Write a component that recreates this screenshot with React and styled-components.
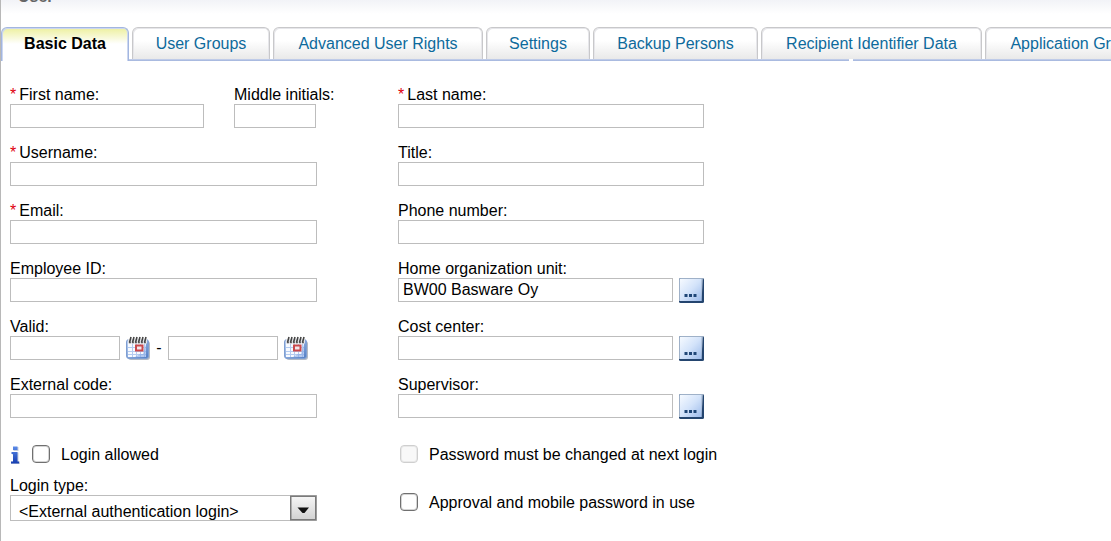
import React, { useState } from 'react';
import styled, { createGlobalStyle, css } from 'styled-components';

const GlobalStyle = createGlobalStyle`
  * { box-sizing: border-box; }
  body {
    margin: 0;
    background: #fff;
    color: #000;
    font: 16px/20px "Liberation Sans", Arial, sans-serif;
    overflow: hidden;
  }
  input, button, select { font: inherit; color: inherit; margin: 0; }
`;

const Page = styled.main`
  min-height: 100vh;
  border-left: 1px solid #b8b8b8;
`;

const Header = styled.header`
  height: 27px;
  overflow: hidden;
  background: linear-gradient(#f2f3f7, #fff 14px);
`;

const Title = styled.h1`
  margin: -13px 0 0 17px;
  font-size: 16px;
  line-height: 20px;
  color: #666;
`;

const TabBar = styled.div`
  position: relative;
  display: flex;
  gap: 3px;
  height: 34px;
  overflow: hidden;
  background: linear-gradient(#c9d3ec, #9fb2dc) bottom / 100% 2px no-repeat;

  &::after {
    content: '';
    position: absolute;
    left: 848px;
    bottom: 0;
    width: 4px;
    height: 2px;
    background: #fff;
  }
`;

const Tab = styled.button`
  flex: none;
  width: ${(p) => p.$width}px;
  height: 32px;
  padding: 0;
  border: 1px solid #c8c8ca;
  border-bottom: 0;
  border-radius: 6px 6px 0 0;
  background: linear-gradient(#fff 40%, #e9e9e9);
  box-shadow: inset 1px 1px 0 #e6e6ea, inset -1px 0 0 #e6e6ea;
  color: #0d6a9c;
  line-height: 30px;
  text-align: center;
  white-space: nowrap;

  ${(p) =>
    p.$active &&
    css`
      height: 34px;
      padding-bottom: 2px;
      border-color: #a3b6e0;
      background: linear-gradient(#edf09f, #fff 16px);
      box-shadow: inset 1px 1px 0 #ccd7f0, inset -1px 0 0 #ccd7f0;
      color: #000;
      font-weight: bold;
    `}
`;

const Form = styled.form`
  display: grid;
  grid-template-columns: minmax(0, 307px) minmax(0, 340px);
  column-gap: 81px;
  padding: 23px 9px 20px;
`;

const Column = styled.div`
  display: flex;
  flex-direction: column;
`;

const Fields = styled.div`
  display: flex;
  flex-direction: column;
  gap: 14px;
  max-width: ${(p) => p.$width}px;
`;

const FieldRow = styled.div`
  display: flex;
  gap: 30px;
`;

const Field = styled.div`
  flex: ${(p) => (p.$width ? `0 0 ${p.$width}px` : '1 1 auto')};
  min-width: 0;
`;

const Label = styled.label`
  display: block;
  height: 20px;
  line-height: 22px;
  white-space: nowrap;
`;

const Star = styled.span`
  margin-right: 3px;
  color: #e00010;
`;

const Control = styled.div`
  display: flex;
  align-items: center;
  gap: 6px;
  height: 24px;
`;

const DateRange = styled(Control)`
  max-width: 298px;
`;

const TextInput = styled.input`
  display: block;
  flex: 1 1 0;
  width: 100%;
  min-width: 0;
  height: 24px;
  padding: 0 4px;
  border: 1px solid #bdbdbd;
  border-radius: 0;
  background: #fff;
  outline: 0;
`;

const IconButton = styled.button`
  display: block;
  flex: none;
  padding: 0;
  border: 0;
  background: none;

  svg { display: block; }
`;

const Options = styled.div`
  display: flex;
  flex-direction: column;
  gap: ${(p) => p.$gap}px;
  margin-top: 26px;
`;

const CheckRow = styled.div`
  display: flex;
  align-items: center;
  height: 20px;
  padding-left: ${(p) => p.$indent || 0}px;
  white-space: nowrap;

  svg { flex: none; margin-right: 12px; }
`;

const Checkbox = styled.input.attrs({ type: 'checkbox' })`
  appearance: none;
  flex: none;
  width: 18px;
  height: 18px;
  margin-right: 11px;
  border: 1px solid #707070;
  border-radius: 4px;
  background: #fff;
  box-shadow: inset 0 0 0 1px #d5d5d5;

  &:checked { background: #3568b5; }
  &:disabled {
    border-color: #cfcfcf;
    background: #f8f8f8;
    box-shadow: inset 0 0 0 1px #e9e9e9;
  }
`;

const SelectBox = styled.div`
  position: relative;
  height: 26px;

  svg {
    position: absolute;
    top: 0;
    right: 0;
    pointer-events: none;
  }
`;

const Select = styled.select`
  appearance: none;
  width: 100%;
  height: 26px;
  padding: 6px 28px 0 8px;
  border: 1px solid #bdbdbd;
  border-radius: 0;
  background: #fff;
  outline: 0;
`;

function CalendarIcon() {
  return (
    <svg width="24" height="24" viewBox="0 0 24 24" aria-hidden="true">
      <defs>
        <linearGradient id="cal" x1="0" y1="0" x2="1" y2="1">
          <stop offset="0" stopColor="#c3d6f3" />
          <stop offset="1" stopColor="#4f7cc4" />
        </linearGradient>
      </defs>
      <rect x="2" y="5" width="22" height="19" rx="3" fill="#8b95a5" opacity=".65" />
      <rect x="0.5" y="3.5" width="22" height="19" rx="2.5" fill="url(#cal)" stroke="#7f9fd3" />
      <path d="M2 7h18v14H2z" fill="#f7faff" />
      <path d="M2 3h19v4.500H2z" fill="#e3e5ea" />
      <path d="M6.500 8v13M10.500 8v13M14.500 8v13M18.500 8v13M2 11.500h18M2 15.500h18M2 18.500h18" stroke="#b4cbf0" />
      <path d="M20 8v13H9l5-3h3z" fill="#86a9e4" opacity=".6" />
      <path d="M3.500 6.500l1.500-5.500M6.500 6.500l1.500-5.500M9.500 6.500l1.500-5.500M12.500 6.500l1.500-5.500M15.500 6.500l1.500-5.500M18.500 6.500l1.500-5.500" stroke="#444" strokeWidth="1.600" />
      <path d="M3 6.500h17" stroke="#555" strokeWidth="1.500" strokeDasharray="1.800 1.200" />
      <rect x="10" y="9.500" width="6.500" height="5" fill="#f3e6ec" stroke="#c9484c" strokeWidth="2" />
    </svg>
  );
}

function BrowseIcon() {
  return (
    <svg width="25" height="25" viewBox="0 0 25 25" aria-hidden="true">
      <defs>
        <linearGradient id="browse" x1="0" y1="0" x2="1" y2="1">
          <stop offset="0" stopColor="#f6faff" />
          <stop offset=".5" stopColor="#d3e3fa" />
          <stop offset="1" stopColor="#9dbbea" />
        </linearGradient>
      </defs>
      <rect width="25" height="25" rx="1.500" fill="#24456f" />
      <path d="M0 1.500Q0 0 1.500 0H24L22.500 23H0z" fill="#9fb1c8" />
      <rect x="1" y="1" width="21.500" height="22" fill="url(#browse)" />
      <path d="M5.500 16h3v3h-3zM10 16h3v3h-3zM14.500 16h3v3h-3z" fill="#1f4677" />
    </svg>
  );
}

function InfoIcon() {
  return (
    <svg width="10" height="20" viewBox="0 0 10 20" aria-hidden="true">
      <defs>
        <linearGradient id="info" x1="0" y1="0" x2="0" y2="1">
          <stop offset="0" stopColor="#5b8be8" />
          <stop offset="1" stopColor="#153db0" />
        </linearGradient>
      </defs>
      <path d="M3.500 3h5v4h-5zM2 8.500h6.500v9H10v2.500H1v-2.500h2V10.500H2z" fill="#c9cfda" />
      <path d="M3 2.500h4.500v3.500H3zM1.500 8h6v9.500h1.500v2H1v-2h2V10H1.500z" fill="url(#info)" />
    </svg>
  );
}

function SelectArrow() {
  return (
    <svg width="27" height="26" viewBox="0 0 27 26" aria-hidden="true">
      <defs>
        <linearGradient id="arrow" x1="0" y1="0" x2="0" y2="1">
          <stop offset="0" stopColor="#f6f6f6" />
          <stop offset="1" stopColor="#d2d2d2" />
        </linearGradient>
      </defs>
      <rect x="0.750" y="1.250" width="25" height="23.500" fill="url(#arrow)" stroke="#7a7a7a" strokeWidth="1.500" />
      <path d="M7.500 12.500h11.500l-4.500 5.500h-2z" fill="#111" />
    </svg>
  );
}

const TABS = [
  ['Basic Data', 128],
  ['User Groups', 138],
  ['Advanced User Rights', 210],
  ['Settings', 104],
  ['Backup Persons', 165],
  ['Recipient Identifier Data', 221],
  ['Application Groups', 186],
];

function TextField({ id, label, required, width, value, browse }) {
  return (
    <Field $width={width}>
      <Label htmlFor={id}>
        {required && <Star>*</Star>}
        {label}
      </Label>
      <Control>
        <TextInput id={id} type="text" defaultValue={value} required={required} />
        {browse && (
          <IconButton type="button" aria-label={`Browse ${label}`}>
            <BrowseIcon />
          </IconButton>
        )}
      </Control>
    </Field>
  );
}

export default function App() {
  const [active, setActive] = useState(0);
  return (
    <Page>
      <GlobalStyle />
      <Header>
        <Title>User</Title>
      </Header>
      <TabBar role="tablist">
        {TABS.map(([name, width], i) => (
          <Tab
            key={name}
            type="button"
            role="tab"
            aria-selected={i === active}
            $width={width}
            $active={i === active}
            onClick={() => setActive(i)}
          >
            {name}
          </Tab>
        ))}
      </TabBar>
      <Form>
        <Column>
          <Fields $width={307}>
            <FieldRow>
              <TextField id="first" label="First name:" required width={194} />
              <TextField id="middle" label="Middle initials:" width={82} />
            </FieldRow>
            <TextField id="username" label="Username:" required />
            <TextField id="email" label="Email:" required />
            <TextField id="employee" label="Employee ID:" />
            <Field>
              <Label htmlFor="valid-from">Valid:</Label>
              <DateRange>
                <TextInput id="valid-from" type="text" />
                <IconButton type="button" aria-label="Pick start date">
                  <CalendarIcon />
                </IconButton>
                <span>-</span>
                <TextInput type="text" aria-label="Valid until" />
                <IconButton type="button" aria-label="Pick end date">
                  <CalendarIcon />
                </IconButton>
              </DateRange>
            </Field>
            <TextField id="external" label="External code:" />
          </Fields>
          <Options $gap={11}>
            <CheckRow>
              <InfoIcon />
              <Checkbox id="login-allowed" />
              <Label htmlFor="login-allowed">Login allowed</Label>
            </CheckRow>
            <Field>
              <Label htmlFor="login-type">Login type:</Label>
              <SelectBox>
                <Select id="login-type">
                  <option>&lt;External authentication login&gt;</option>
                </Select>
                <SelectArrow />
              </SelectBox>
            </Field>
          </Options>
        </Column>
        <Column>
          <Fields $width={306}>
            <TextField id="last" label="Last name:" required />
            <TextField id="title" label="Title:" />
            <TextField id="phone" label="Phone number:" />
            <TextField id="unit" label="Home organization unit:" value="BW00 Basware Oy" browse />
            <TextField id="cost" label="Cost center:" browse />
            <TextField id="supervisor" label="Supervisor:" browse />
          </Fields>
          <Options $gap={28}>
            <CheckRow $indent={2}>
              <Checkbox id="change-password" disabled />
              <Label htmlFor="change-password">Password must be changed at next login</Label>
            </CheckRow>
            <CheckRow $indent={2}>
              <Checkbox id="mobile-password" />
              <Label htmlFor="mobile-password">Approval and mobile password in use</Label>
            </CheckRow>
          </Options>
        </Column>
      </Form>
    </Page>
  );
}
